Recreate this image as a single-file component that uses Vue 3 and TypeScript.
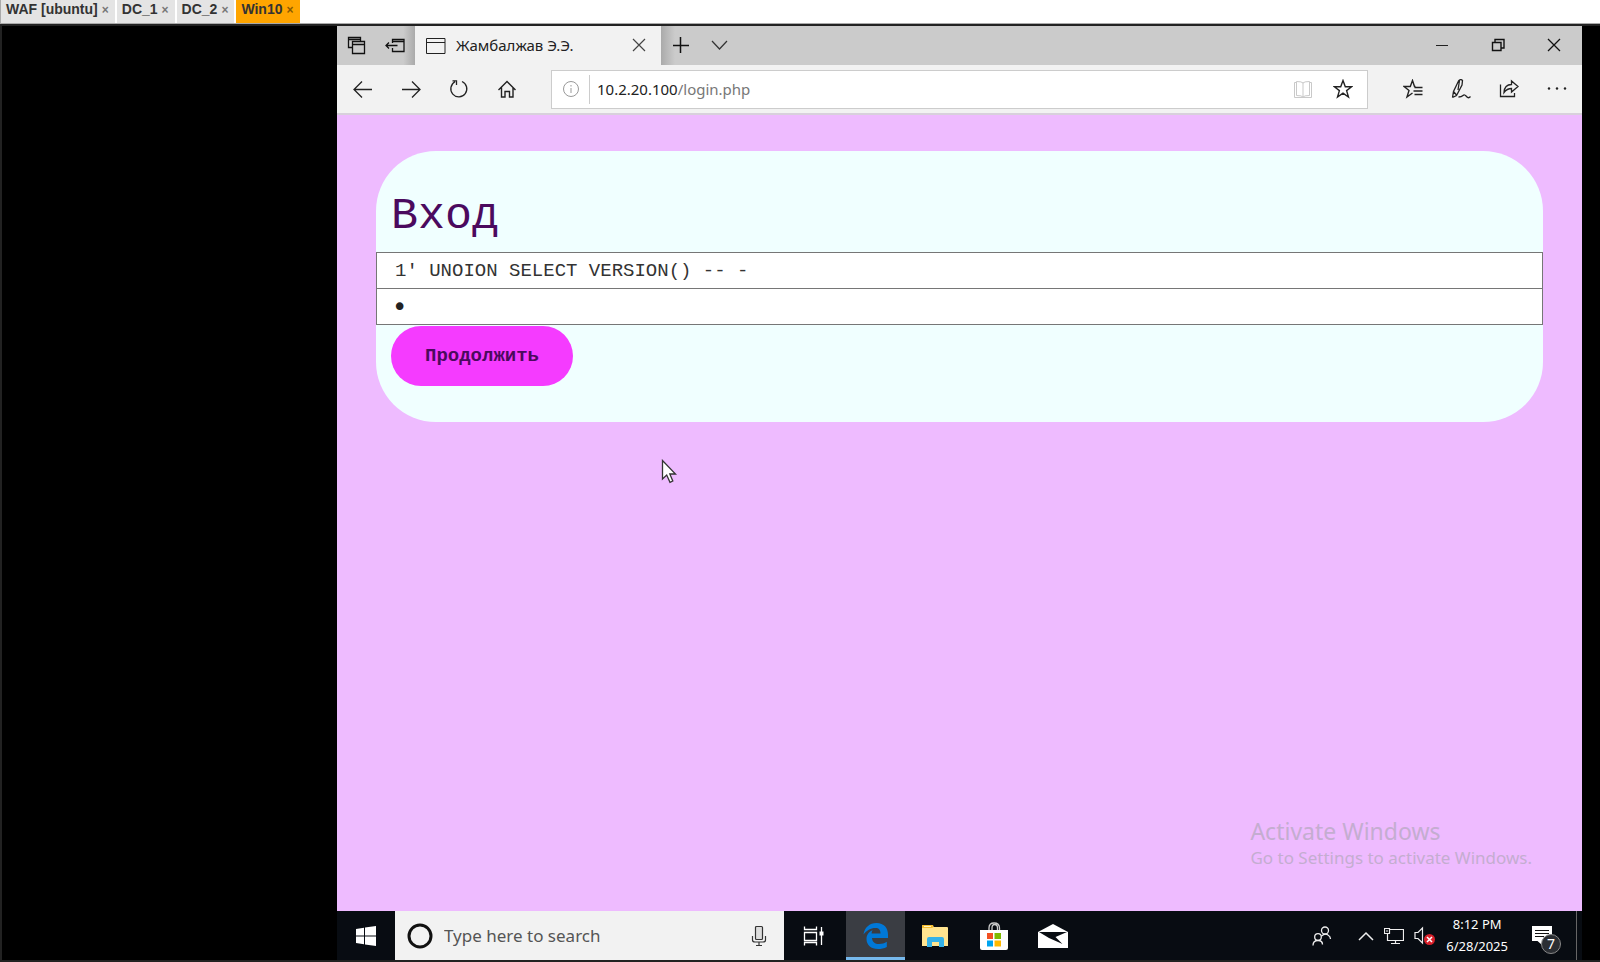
<script setup lang="ts">
interface Session {
  name: string
  active: boolean
}

const sessions: Session[] = [
  { name: 'WAF [ubuntu]', active: false },
  { name: 'DC_1', active: false },
  { name: 'DC_2', active: false },
  { name: 'Win10', active: true },
]

const login = "1' UNOION SELECT VERSION() -- -"
const secret = '1'
</script>

<template>
  <div class="console">
    <nav class="sessions" aria-label="Sessions">
      <div v-for="s in sessions" :key="s.name" class="session" :class="{ active: s.active }">
        <a href="#">{{ s.name }}</a>
        <button type="button" :aria-label="'Close ' + s.name">×</button>
      </div>
    </nav>

    <main class="viewport">
      <div class="desktop">
        <header class="titlebar">
          <div class="setaside">
            <button type="button" aria-label="Tabs set aside">
              <svg width="20" height="20" viewBox="0 0 20 20" fill="none" stroke="#111" stroke-width="1.300">
                <path d="M6 12.500H2.500V2.500H14.500V6M2.500 4.500H14.500" />
                <path d="M6.500 6.500H18.500V18.500H6.500ZM6.500 9.500H18.500" />
              </svg>
            </button>
            <button type="button" aria-label="Set these tabs aside">
              <svg width="20" height="20" viewBox="0 0 20 20" fill="none" stroke="#111" stroke-width="1.300">
                <path d="M7.500 8V4.500H19V16.500H7.500V13M7.500 6.500H19M1 10.500H12.500M4 7.500L1 10.500L4 13.500" />
              </svg>
            </button>
          </div>
          <div class="tab">
            <svg width="20" height="16" viewBox="0 0 20 16" fill="none" stroke="#222">
              <path d="M.5 .5H19V15.500H.5ZM.5 4.500H19" />
            </svg>
            <span class="tab-title">Жамбалжав Э.Э.</span>
            <button type="button" aria-label="Close tab">
              <svg width="14" height="14" viewBox="0 0 14 14" stroke="#444" stroke-width="1.200"><path d="M1 1L13 13M13 1L1 13" /></svg>
            </button>
          </div>
          <div class="newtab">
            <button type="button" aria-label="New tab">
              <svg width="18" height="18" viewBox="0 0 18 18" stroke="#111" stroke-width="1.500"><path d="M1 9.500H17M8.500 1V17" /></svg>
            </button>
            <button type="button" aria-label="Tab previews">
              <svg width="18" height="18" viewBox="0 0 18 18" fill="none" stroke="#333" stroke-width="1.200"><path d="M1 5L8.500 13L16 5" /></svg>
            </button>
          </div>
          <div class="window-controls">
            <button type="button" aria-label="Minimize">
              <svg width="14" height="14" viewBox="0 0 14 14" stroke="#222"><path d="M1 7.500H13" /></svg>
            </button>
            <button type="button" aria-label="Restore">
              <svg width="14" height="14" viewBox="0 0 14 14" fill="none" stroke="#111" stroke-width="1.400"><path d="M1.500 4.500H10V12.500H1.500ZM4 4V1.500H13V10H10" /></svg>
            </button>
            <button type="button" aria-label="Close window">
              <svg width="14" height="14" viewBox="0 0 14 14" stroke="#111" stroke-width="1.300"><path d="M1 1L13 13M13 1L1 13" /></svg>
            </button>
          </div>
        </header>

        <div class="toolbar">
          <div class="nav-buttons">
            <button type="button" aria-label="Back">
              <svg width="20" height="20" viewBox="0 0 20 20" fill="none" stroke="#222" stroke-width="1.300"><path d="M1 10.500H19M9 2.500L1 10.500L9 18.500" /></svg>
            </button>
            <button type="button" aria-label="Forward">
              <svg width="20" height="20" viewBox="0 0 20 20" fill="none" stroke="#222" stroke-width="1.300"><path d="M1 10.500H19M11 2.500L19 10.500L11 18.500" /></svg>
            </button>
            <button type="button" aria-label="Refresh">
              <svg width="20" height="20" viewBox="0 0 20 20" fill="none" stroke="#222" stroke-width="1.300"><path d="M13 2.500A8 8 0 1 1 6 2.800M3.500 1.800H7.500V6" /></svg>
            </button>
            <button type="button" aria-label="Home">
              <svg width="20" height="20" viewBox="0 0 20 20" fill="none" stroke="#222" stroke-width="1.400"><path d="M1.500 11L10 2.500L18.500 11M4.500 8.500V18H8V12.500H12.500V18H16V8.500" /></svg>
            </button>
          </div>
          <div class="address">
            <svg class="info" width="16" height="16" viewBox="0 0 16 16" fill="none" stroke="#999"><circle cx="8" cy="8" r="7.500" /><path d="M8 7V12M8 4V5.500" /></svg>
            <a href="#" class="url"><span>10.2.20.100</span>/login.php</a>
            <button type="button" aria-label="Reading view">
              <svg width="20" height="20" viewBox="0 0 20 20" fill="none" stroke="#c9c9c9"><path d="M3 3.500H1.500V18.500H18.500V3.500H17M10 3.500V18.500M10 4Q9 2.500 3.500 2.500V16.500Q9 16.500 10 18M10 4Q11 2.500 16.500 2.500V16.500Q11 16.500 10 18" /></svg>
            </button>
            <button type="button" aria-label="Add to favorites">
              <svg width="20" height="20" viewBox="0 0 20 20" fill="none" stroke="#222" stroke-width="1.400"><path d="M10 1.500L12.300 7.700H18.700L13.600 11.600L15.500 18L10 14.200L4.500 18L6.400 11.600L1.300 7.700H7.700Z" /></svg>
            </button>
          </div>
          <div class="tools">
            <button type="button" aria-label="Favorites hub">
              <svg width="20" height="20" viewBox="0 0 20 20" fill="none" stroke="#222" stroke-width="1.400"><path d="M12.500 7.500H11.500L9.500 1.500L7.300 7.500H1L6 11.500L4 18L9.500 14M11.500 8.500H19.500M10.500 12H19.500M11.500 15.500H19.500" /></svg>
            </button>
            <button type="button" aria-label="Web notes">
              <svg width="20" height="20" viewBox="0 0 20 20" fill="none" stroke="#222" stroke-width="1.300"><path d="M1.500 18.500L2.500 12.500L7.500 2Q9.500 -.5 11.500 1.500L11 6L5.500 16.500L1.500 18.500M8.500 1.500L7 11M2.500 12.500L5.500 16M7.500 18Q10.500 18 12 16.500T15.500 17.500T19.500 17.500" /></svg>
            </button>
            <button type="button" aria-label="Share">
              <svg width="20" height="20" viewBox="0 0 20 20" fill="none" stroke="#222" stroke-width="1.300"><path d="M1.500 5.500V17.500H15.500V14M5 13.500Q5.500 5.500 12.500 5.500V2L19 7.500L12.500 13V9.500Q8 9.500 5 13.500Z" /></svg>
            </button>
            <button type="button" aria-label="More">
              <svg width="20" height="20" viewBox="0 0 20 20" fill="#222"><circle cx="2" cy="9.500" r="1.200" /><circle cx="10" cy="9.500" r="1.200" /><circle cx="18" cy="9.500" r="1.200" /></svg>
            </button>
          </div>
        </div>

        <section class="page">
          <form class="card" @submit.prevent>
            <h1>Вход</h1>
            <input type="text" aria-label="Логин" :value="login" />
            <input type="password" aria-label="Пароль" :value="secret" />
            <button type="submit">Продолжить</button>
          </form>
          <div class="watermark">
            <p class="wm-title">Activate Windows</p>
            <p class="wm-text">Go to Settings to activate Windows.</p>
          </div>
          <svg class="cursor" width="17" height="26" viewBox="0 0 17 26"><path d="M1.500 1.500V20L5.700 16L9 23.300L11.800 22L8.800 15H14.500Z" fill="#fff" stroke="#333" stroke-width="1.300" /></svg>
        </section>

        <footer class="taskbar">
          <button type="button" class="start" aria-label="Start">
            <svg width="20" height="20" viewBox="0 0 20 20" fill="#fff"><path d="M0 3L8 1.800V9.500H0ZM9 1.600L20 0V9.500H9ZM0 10.500H8V18.200L0 17ZM9 10.500H20V20L9 18.400Z" /></svg>
          </button>
          <div class="search">
            <svg width="26" height="26" viewBox="0 0 26 26" fill="none" stroke="#111" stroke-width="3"><circle cx="13" cy="13" r="11" /></svg>
            <input type="text" aria-label="Search" placeholder="Type here to search" />
            <svg width="16" height="22" viewBox="0 0 16 22" fill="none" stroke="#333" stroke-width="1.200"><rect x="4.500" y="1.500" width="7" height="13" rx="1" fill="#ddd" /><path d="M1.500 11V15Q1.500 17 4 17H12Q14.500 17 14.500 15V11M8 17V20.500M5 20.500H11" /></svg>
          </div>
          <button type="button" class="app taskview" aria-label="Task view">
            <svg width="22" height="20" viewBox="0 0 22 20" fill="none" stroke="#fff" stroke-width="1.300"><path d="M1.500 .5V3.500H13.500V.5M1.500 6.500H13.500V14.500H1.500ZM1.500 19.500V16.500H13.500V19.500M18.500 1V19" /><path d="M16.500 5.500H20.500V9.500H16.500Z" fill="#fff" stroke="none" /></svg>
          </button>
          <button type="button" class="app current" aria-label="Microsoft Edge">
            <svg width="26" height="26" viewBox="0 0 26 26" fill="#0078d7"><path d="M0.500 11.500C1.500 4.500 6.500 0 13.500 0C21 0 25 5 25 11.500V15H9C9.300 19 12 21 16 21C19 21 21.500 20.200 23.800 18.800V24C21 25.500 18 26 15 26C8 26 3.500 22 3.500 16C3.500 12 6 8.500 9.800 7C8.800 8.200 8.700 9.200 8.600 10.500H17.500C17.500 7 16 5 12.500 5C7.500 5 3.500 7.500 .5 11.500Z" /></svg>
          </button>
          <button type="button" class="app" aria-label="File Explorer">
            <svg width="26" height="24" viewBox="0 0 26 24"><path d="M0 2Q0 1 1 1H10Q11.500 1 11.500 3H25Q26 3 26 4V22H0Z" fill="#ffe48f" /><path d="M0 2Q0 1 1 1H10Q11.500 1 11.500 3L10 4H0Z" fill="#f5bd2e" /><path d="M2 2.500H9" stroke="#fff3c0" /><path d="M5 23V15Q5 13 7 13H20Q22 13 22 15V23H17V18H10V23Z" fill="#35b2e8" /></svg>
          </button>
          <button type="button" class="app" aria-label="Store">
            <svg width="28" height="28" viewBox="0 0 28 28"><path d="M9 9V6Q9 1 14 1Q19.500 1 19.500 6V9M12 8V6Q12 2.500 14.500 2.500Q17.500 2.500 17.500 6V8" fill="none" stroke="#ccc" stroke-width="1.300" /><path d="M0 8H28V26Q28 28 26 28H2Q0 28 0 26Z" fill="#fff" /><path d="M7 11H13V17H7Z" fill="#f25022" /><path d="M14.500 11H21V17H14.500Z" fill="#7fba00" /><path d="M7 18.500H13V24.500H7Z" fill="#00a4ef" /><path d="M14.500 18.500H21V24.500H14.500Z" fill="#ffb900" /></svg>
          </button>
          <button type="button" class="app" aria-label="Mail">
            <svg width="30" height="24" viewBox="0 0 30 24"><path d="M0 8L15 0L30 8V24H0Z" fill="#fff" /><path d="M1 8H29L17.500 13L24.500 20L11 14Z" fill="#080c12" /></svg>
          </button>
          <div class="tray">
            <button type="button" class="people" aria-label="People">
              <svg width="20" height="20" viewBox="0 0 20 20" fill="none" stroke="#eee" stroke-width="1.300"><circle cx="13" cy="4.500" r="3.500" /><circle cx="6" cy="11" r="3.300" /><path d="M1 19.500Q1 14.500 6 14.500Q10.500 14.500 10.500 18.500M9.500 10Q13 7 16 9Q18.500 10.500 18.500 13" /></svg>
            </button>
            <button type="button" aria-label="Show hidden icons">
              <svg width="16" height="16" viewBox="0 0 16 16" fill="none" stroke="#eee" stroke-width="1.500"><path d="M1 12L8 5L15 12" /></svg>
            </button>
            <button type="button" aria-label="Network">
              <svg width="20" height="18" viewBox="0 0 20 18" fill="none" stroke="#eee" stroke-width="1.200"><path d="M6 2.500H19.500V13.500H3.500V7M.5 1.500H5.500V6.500H.5ZM2 4H4M11.500 13.500V16.500M7 16.500H16" /></svg>
            </button>
            <button type="button" aria-label="Volume muted">
              <svg width="22" height="20" viewBox="0 0 22 20"><path d="M1 6.500H4L8.500 2V17L4 12.500H1Z" fill="none" stroke="#eee" stroke-width="1.200" /><circle cx="15.500" cy="13.500" r="5.500" fill="#d8202a" /><path d="M13 11L18 16M18 11L13 16" stroke="#fff" stroke-width="1.500" /></svg>
            </button>
            <time class="clock"><span>8:12 PM</span><span>6/28/2025</span></time>
            <button type="button" class="notices" aria-label="Notifications">
              <svg width="20" height="19" viewBox="0 0 20 19"><path d="M0 0H20V15H10V19L5.500 15H0Z" fill="#fff" /><path d="M3 4.500H17M3 7.500H17M3 10.500H12" stroke="#111" /></svg>
              <span class="badge">7</span>
            </button>
            <span class="peek"></span>
          </div>
        </footer>
      </div>
    </main>
  </div>
</template>

<style>
html,
body,
#app {
  height: 100%;
}
body {
  margin: 0;
  background: #000;
}
</style>

<style scoped>
.console {
  display: flex;
  flex-direction: column;
  height: 100%;
  overflow: hidden;
  font-family: 'Noto Sans', sans-serif;
}
* {
  box-sizing: border-box;
}
button {
  border: 0;
  padding: 0;
  margin: 0;
  background: none;
  font: inherit;
  color: inherit;
  display: flex;
  align-items: center;
  justify-content: center;
}
svg {
  display: block;
  flex: none;
}
a {
  color: inherit;
  text-decoration: none;
}
.sessions {
  display: flex;
  gap: 2px;
  height: 24px;
  flex: none;
  background: #fff;
  border-bottom: 1px solid #aaa;
  border-left: 1px solid #aaa;
}
.session {
  display: flex;
  align-items: center;
  gap: 4px;
  padding: 0 6px 5px 5px;
  background: #e4e4e4;
  color: #333;
  font: bold 14px 'Liberation Sans', Arial, sans-serif;
}
.session button {
  font-size: 12px;
  color: #777;
  padding-top: 2px;
}
.session.active {
  background: #ffa500;
}
.session.active button {
  color: #8a5a00;
}
.viewport {
  flex: 1;
  min-height: 0;
  display: flex;
  justify-content: flex-end;
  padding-right: 18px;
  background: #000;
  border: 2px solid #222;
  border-right: 0;
}
.desktop {
  flex: 0 1 1245px;
  min-width: 0;
  display: flex;
  flex-direction: column;
}
.titlebar {
  display: flex;
  height: 39px;
  flex: none;
  background: #cbcbcb;
}
.titlebar button,
.tab-title {
  padding-bottom: 2px;
}
.setaside {
  display: flex;
  align-items: center;
  gap: 19px;
  width: 78px;
  padding-left: 9px;
  background: linear-gradient(90deg, transparent 85%, #aaa);
}
.tab {
  display: flex;
  align-items: center;
  width: 246px;
  padding: 0 15px 0 11px;
  background: #f2f2f2;
  font-size: 15px;
  color: #222;
}
.tab-title {
  flex: 1;
  margin-left: 10px;
  white-space: nowrap;
}
.newtab {
  display: flex;
  gap: 21px;
  padding-left: 11px;
  background: linear-gradient(90deg, #aaa, transparent 14px);
}
.window-controls {
  display: flex;
  margin-left: auto;
}
.window-controls button {
  width: 56px;
}
.toolbar {
  display: flex;
  align-items: center;
  height: 50px;
  flex: none;
  background: #f2f2f2;
  border-bottom: 2px solid #d8d0dc;
}
.nav-buttons,
.tools {
  display: flex;
  gap: 28px;
  padding: 0 15px;
}
.nav-buttons {
  padding: 0 34px 0 16px;
}
.tools {
  padding-left: 35px;
}
.address {
  flex: 1;
  min-width: 0;
  display: flex;
  align-items: center;
  height: 39px;
  padding: 0 14px 0 11px;
  gap: 20px;
  background: #fff;
  border: 1px solid #ccc;
}
.url {
  flex: 1;
  margin-left: -10px;
  padding-left: 7px;
  line-height: 29px;
  border-left: 1px solid #ccc;
  font-size: 15px;
  color: #777;
}
.url span {
  color: #222;
}
.page {
  position: relative;
  flex: 1;
  min-height: 0;
  padding: 36px 39px;
  background: #eebbff;
}
.card {
  display: flex;
  flex-direction: column;
  padding: 38px 0 36px;
  border-radius: 60px;
  background: #f0ffff;
  font-family: 'Liberation Mono', 'Courier New', monospace;
}
.card h1 {
  margin: 0 0 7px;
  padding: 0 15px;
  font-size: 45px;
  line-height: 56px;
  font-weight: 400;
  color: #4b0a5e;
}
.card input {
  width: 100%;
  height: 37px;
  margin: 0 0 -1px;
  padding: 0 18px;
  border: 1px solid #767676;
  border-radius: 0;
  background: #fff;
  color: #333;
  font: 19px 'Liberation Mono', 'Courier New', monospace;
}
.card input[type='password'] {
  padding: 0 15px;
  color: #222;
  font: 26px 'DejaVu Sans', sans-serif;
}
.card button {
  align-self: flex-start;
  height: 60px;
  margin: 2px 0 0 15px;
  padding: 0 34px;
  border-radius: 30px;
  background: #f53bff;
  color: #4b0a5e;
  font-size: 19px;
  font-weight: 700;
}
.watermark {
  position: absolute;
  right: 50px;
  bottom: 41px;
  color: #c4add0;
}
.watermark p {
  margin: 0;
}
.wm-title {
  font-size: 23px;
  line-height: 30px;
}
.wm-text {
  font-size: 17px;
  line-height: 24px;
}
.cursor {
  position: absolute;
  left: 324px;
  top: 344px;
}
.taskbar {
  display: flex;
  height: 49px;
  flex: none;
  background: #080c12;
  color: #fff;
}
.start {
  width: 58px;
}
.search {
  flex: 0 1 389px;
  min-width: 0;
  display: flex;
  align-items: center;
  padding: 0 17px 0 12px;
  gap: 11px;
  background: #f2f2f2;
}
.search input {
  flex: 1;
  min-width: 0;
  border: 0;
  padding: 0;
  background: none;
  font: 17px 'Noto Sans', sans-serif;
}
.search input::placeholder {
  color: #555;
}
.app {
  width: 59px;
}
.taskview {
  width: 62px;
  padding-right: 3px;
}
.current {
  background: #3a3d43;
  border-bottom: 3px solid #76b9ed;
}
.current svg {
  margin-top: 3px;
}
.tray {
  display: flex;
  align-items: center;
  margin-left: auto;
}
.tray button {
  margin-right: 10px;
}
.tray .people {
  margin-right: 26px;
}
.clock {
  display: flex;
  flex-direction: column;
  align-items: center;
  margin: 0 24px 0 0;
  padding-bottom: 2px;
  font-size: 13px;
  line-height: 22px;
}
.tray .notices {
  position: relative;
  margin-right: 24px;
}
.badge {
  position: absolute;
  left: 9px;
  top: 8px;
  width: 20px;
  height: 20px;
  border: 1px solid #888;
  border-radius: 50%;
  background: #2b2e33;
  font-size: 14px;
  line-height: 18px;
  text-align: center;
}
.peek {
  align-self: stretch;
  width: 6px;
  border-left: 1px solid #666;
}
</style>
